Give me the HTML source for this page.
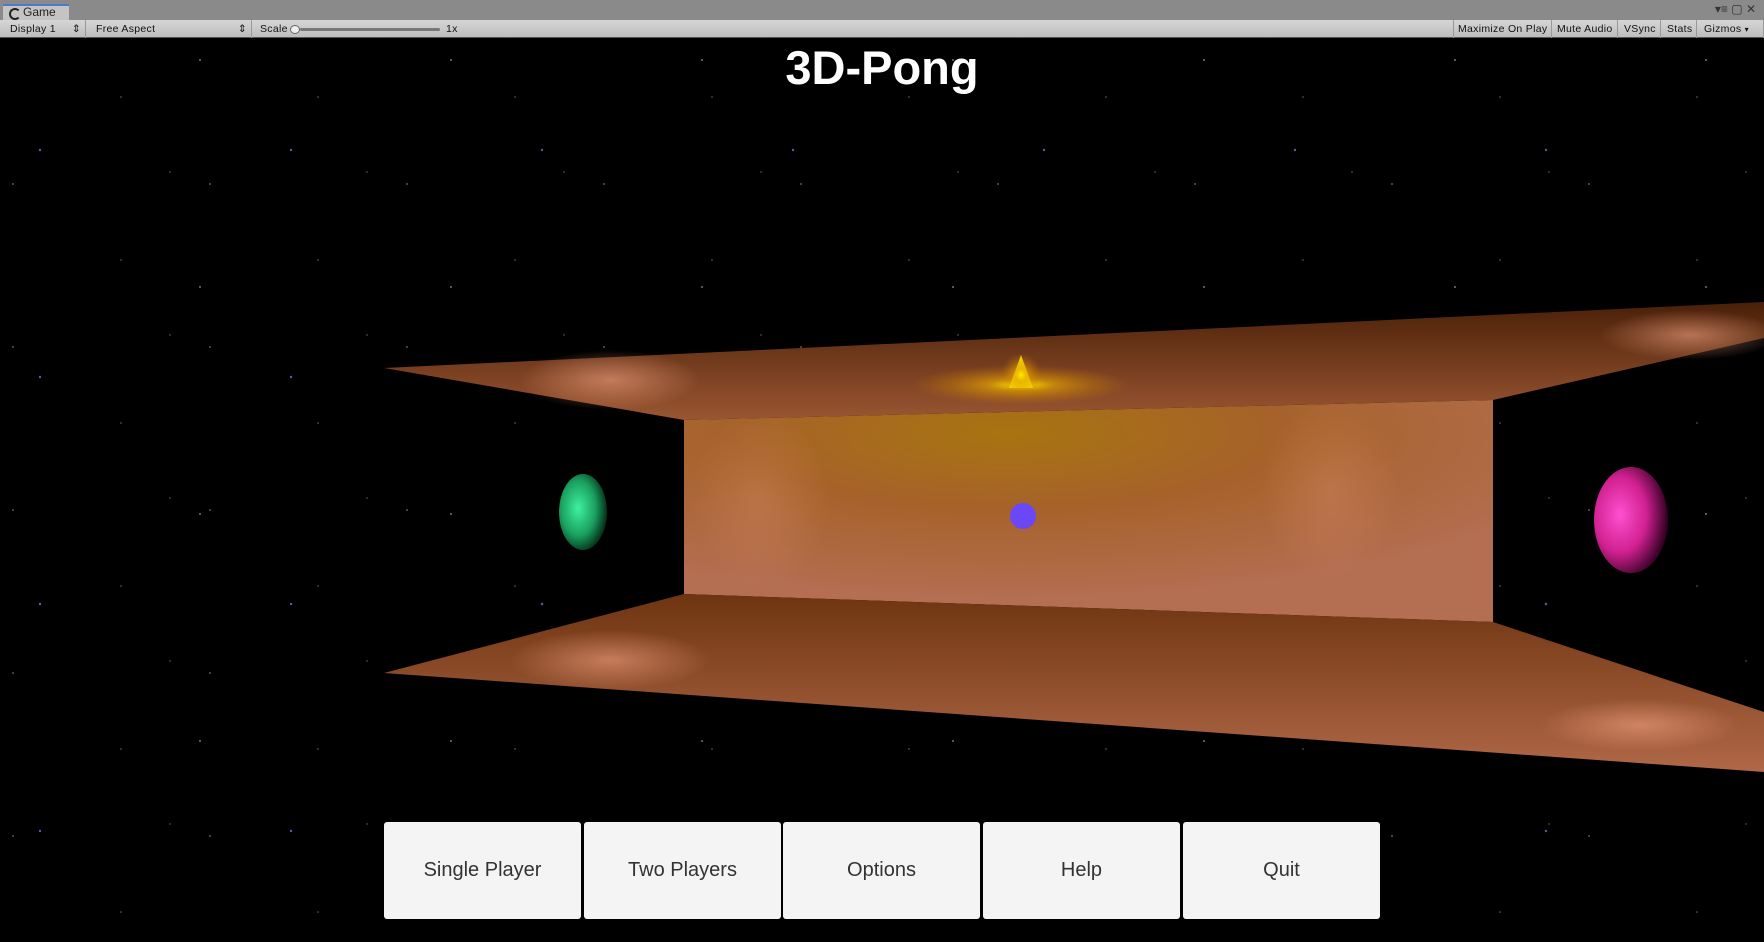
<!DOCTYPE html>
<html><head><meta charset="utf-8"><style>
*{margin:0;padding:0;box-sizing:border-box}
body{width:1764px;height:942px;overflow:hidden;background:#000;font-family:"Liberation Sans",sans-serif;position:relative}
#tabbar{position:absolute;left:0;top:0;width:1764px;height:20px;background:#8a8a8a}
#tab{position:absolute;left:3px;top:4px;width:66px;height:16px;background:#c4c4c4;border-top:2px solid #4a7ac8;font-size:12px;color:#222;padding-left:20px;line-height:13px}
#tab:before{content:"";position:absolute;left:6px;top:2px;width:8px;height:8px;border-radius:50%;border:2px solid #222;border-right-color:transparent}
#toolbar{position:absolute;left:0;top:20px;width:1764px;height:18px;background:linear-gradient(#d6d6d6,#bdbdbd);border-bottom:1px solid #555;font-size:10.5px;color:#111;letter-spacing:.3px}
.ti{position:absolute;top:0;height:18px;line-height:18px;border-right:1px solid #999;padding:0 4px}
#game{position:absolute;left:0;top:38px;width:1764px;height:904px;overflow:hidden;background:#000}
h1{position:absolute;left:0;top:40px;width:1764px;text-align:center;color:#fff;font-size:47px;font-weight:bold;line-height:56px}
.btn{position:absolute;top:822px;width:197px;height:97px;background:#f4f4f4;border-radius:3px;text-align:center;line-height:97px;font-size:20px;color:#333}
</style></head><body>
<div id="tabbar"><div id="tab">Game</div>
<div style="position:absolute;right:8px;top:2px;font-size:12px;color:#333">▾≡ ▢ ✕</div></div>
<div id="toolbar">
<div class="ti" style="left:6px;width:80px">Display 1<span style="position:absolute;right:4px">⇕</span></div>
<div class="ti" style="left:92px;width:160px">Free Aspect<span style="position:absolute;right:4px">⇕</span></div>
<div class="ti" style="left:256px;width:200px;border:none">Scale
<span style="position:absolute;left:34px;top:5px;width:10px;height:9px;border-radius:50%;border:1px solid #666;background:#eee"></span>
<span style="position:absolute;left:44px;top:8px;width:140px;height:3px;background:#777;border-radius:2px"></span>
<span style="position:absolute;left:190px">1x</span></div>
<div class="ti" style="left:1453px;border-left:1px solid #999">Maximize On Play</div>
<div class="ti" style="left:1553px">Mute Audio</div>
<div class="ti" style="left:1620px">VSync</div>
<div class="ti" style="left:1663px">Stats</div>
<div class="ti" style="left:1700px;width:64px">Gizmos <span style="font-size:8px">▾</span></div>
</div>
<div id="game">
<svg width="1764" height="904" viewBox="0 38 1764 904" style="position:absolute;left:0;top:0">
<defs>
<radialGradient id="wall" cx="0.4" cy="0.15" r="0.75"><stop offset="0" stop-color="#a87410"/><stop offset="0.45" stop-color="#a6622a"/><stop offset="1" stop-color="#b46e52"/></radialGradient>
<linearGradient id="ceil" x1="0" y1="0" x2="0" y2="1"><stop offset="0" stop-color="#4a2008"/><stop offset="1" stop-color="#9a5632"/></linearGradient>
<linearGradient id="floor" x1="0" y1="0" x2="0" y2="1"><stop offset="0" stop-color="#6e3410"/><stop offset="1" stop-color="#b06848"/></linearGradient>
<radialGradient id="spot" r="0.5"><stop offset="0" stop-color="#f0a080" stop-opacity=".6"/><stop offset="1" stop-color="#f0a080" stop-opacity="0"/></radialGradient>
<radialGradient id="glow" r="0.5"><stop offset="0" stop-color="#ffee00"/><stop offset="0.3" stop-color="#e0a000" stop-opacity=".7"/><stop offset="1" stop-color="#c07000" stop-opacity="0"/></radialGradient>
<radialGradient id="green" cx="0.4" cy="0.45" r="0.6"><stop offset="0" stop-color="#40f0a0"/><stop offset="0.6" stop-color="#1aa060"/><stop offset="1" stop-color="#033018"/></radialGradient>
<radialGradient id="pink" cx="0.35" cy="0.45" r="0.65"><stop offset="0" stop-color="#ff50d0"/><stop offset="0.55" stop-color="#d02090"/><stop offset="1" stop-color="#300020"/></radialGradient>
<pattern id="stars" width="197" height="163" patternUnits="userSpaceOnUse"><circle cx="13" cy="21" r="1" fill="#aac"/><circle cx="121" cy="97" r=".8" fill="#ccd"/><circle cx="170" cy="9" r=".7" fill="#dda"/></pattern>
<pattern id="stars2" width="251" height="227" patternUnits="userSpaceOnUse"><circle cx="40" cy="150" r="1.2" fill="#99f"/><circle cx="200" cy="60" r=".9" fill="#fff"/></pattern>
</defs>
<rect x="0" y="38" width="1764" height="904" fill="url(#stars)" opacity=".5"/>
<rect x="0" y="38" width="1764" height="904" fill="url(#stars2)" opacity=".6"/>
<polygon points="684,420 1493,400 1493,622 684,594" fill="url(#wall)"/>
<ellipse cx="760" cy="500" rx="70" ry="90" fill="url(#spot)" opacity=".4"/>
<ellipse cx="1330" cy="490" rx="70" ry="90" fill="url(#spot)" opacity=".4"/>
<polygon points="384,368 1764,302 1764,338 1493,400 684,420" fill="url(#ceil)"/>
<ellipse cx="610" cy="380" rx="90" ry="30" fill="url(#spot)"/>
<ellipse cx="1690" cy="335" rx="90" ry="25" fill="url(#spot)"/>
<polygon points="384,673 684,594 1493,622 1764,712 1764,772" fill="url(#floor)"/>
<ellipse cx="610" cy="660" rx="100" ry="30" fill="url(#spot)"/>
<ellipse cx="1640" cy="725" rx="100" ry="26" fill="url(#spot)"/>
<ellipse cx="1021" cy="385" rx="110" ry="20" fill="url(#glow)"/>
<polygon points="1021,355 1033,388 1009,388" fill="#ffe800"/>
<ellipse cx="1021" cy="375" rx="20" ry="22" fill="url(#glow)"/>
<ellipse cx="583" cy="512" rx="24" ry="38" fill="url(#green)"/>
<ellipse cx="1631" cy="520" rx="37" ry="53" fill="url(#pink)"/>
<circle cx="1023" cy="516" r="13" fill="#6a48f8"/>
</svg>
</div>
<h1>3D-Pong</h1>
<div class="btn" style="left:384px">Single Player</div>
<div class="btn" style="left:584px">Two Players</div>
<div class="btn" style="left:783px">Options</div>
<div class="btn" style="left:983px">Help</div>
<div class="btn" style="left:1183px">Quit</div>
</body></html>
